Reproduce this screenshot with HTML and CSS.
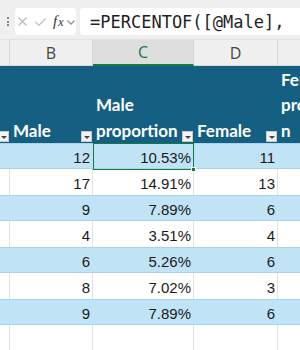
FILE: index.html
```html
<!DOCTYPE html>
<html>
<head>
<meta charset="utf-8">
<link rel="stylesheet" href="styles.css">
</head>
<body>
<div class="fbar">
  <div class="grip"><span></span><span></span><span></span></div>
  <div class="btns">
    <svg class="ico-x" width="9" height="9" viewBox="0 0 9 9"><path d="M0.5 0.5 L8.5 8.5 M8.5 0.5 L0.5 8.5" stroke="#b9b9b9" stroke-width="1.1" fill="none"/></svg>
    <svg class="ico-ok" width="11" height="8" viewBox="0 0 11 8"><path d="M0.5 4 L4 7.3 L10.5 0.5" stroke="#b9b9b9" stroke-width="1.1" fill="none"/></svg>
    <span class="fx"><i>f</i><i class="x">x</i></span>
    <svg class="ico-chev" width="8" height="5" viewBox="0 0 8 5"><path d="M0.5 0.5 L4 4.2 L7.5 0.5" stroke="#8a8a8a" stroke-width="1.1" fill="none"/></svg>
  </div>
  <div class="formula">=PERCENTOF([@Male],</div>
</div>

<div class="row colhead">
  <div class="c"></div>
  <div class="c">B</div>
  <div class="c sel">C</div>
  <div class="c">D</div>
  <div class="c"></div>
</div>

<div class="row thead">
  <div class="h"><span class="flt"></span></div>
  <div class="h"><span>Male</span><span class="flt"></span></div>
  <div class="h"><span>Male</span><span>proportion</span><span class="flt"></span></div>
  <div class="h"><span>Female</span><span class="flt"></span></div>
  <div class="h"><span>Female</span><span>proportio</span><span>n</span></div>
</div>

<div class="row r band">
  <div class="c"></div><div class="c">12</div><div class="c cur">10.53%<span class="handle"></span></div><div class="c">11</div><div class="c"></div>
</div>
<div class="row r">
  <div class="c"></div><div class="c">17</div><div class="c">14.91%</div><div class="c">13</div><div class="c"></div>
</div>
<div class="row r band">
  <div class="c"></div><div class="c">9</div><div class="c">7.89%</div><div class="c">6</div><div class="c"></div>
</div>
<div class="row r">
  <div class="c"></div><div class="c">4</div><div class="c">3.51%</div><div class="c">4</div><div class="c"></div>
</div>
<div class="row r band">
  <div class="c"></div><div class="c">6</div><div class="c">5.26%</div><div class="c">6</div><div class="c"></div>
</div>
<div class="row r">
  <div class="c"></div><div class="c">8</div><div class="c">7.02%</div><div class="c">3</div><div class="c"></div>
</div>
<div class="row r band">
  <div class="c"></div><div class="c">9</div><div class="c">7.89%</div><div class="c">6</div><div class="c"></div>
</div>
<div class="row r">
  <div class="c"></div><div class="c"></div><div class="c"></div><div class="c"></div><div class="c"></div>
</div>
</body>
</html>
```

FILE: styles.css
```css
* { box-sizing: border-box; margin: 0; padding: 0; }
html, body { width: 300px; height: 350px; overflow: hidden; background: #fff; }
body { font-family: "Liberation Sans", Arial, sans-serif; }

.fbar {
  display: flex;
  align-items: flex-start;
  width: 340px;
  height: 40px;
  padding-top: 8px;
  background: #efefef;
  border-bottom: 1px solid #e2e2e2;
}
.grip {
  width: 15px;
  height: 27px;
  display: flex;
  flex-direction: column;
  align-items: center;
  justify-content: center;
  gap: 1.5px;
}
.grip span { width: 2px; height: 2px; background: #666; border-radius: 1px; }
.btns {
  width: 61px;
  height: 27px;
  background: #fff;
  border-radius: 4px;
  display: flex;
  align-items: center;
  padding-left: 3px;
}
.ico-x { margin-top: 0px; }
.ico-ok { margin-left: 8px; margin-top: 1px; }
.fx {
  margin-left: 7px;
  font-family: "Liberation Serif", "Times New Roman", serif;
  font-size: 15px;
  color: #333;
  line-height: 1;
  white-space: nowrap;
}
.fx .x { font-size: 12px; margin-left: 1px; }
.ico-chev { margin-left: 3px; margin-top: 1px; }
.formula {
  flex: 1;
  margin-left: 4px;
  height: 27px;
  background: #fff;
  border-radius: 4px 0 0 4px;
  padding: 2px 0 0 10px;
  font-family: "DejaVu Sans Mono", "Liberation Mono", monospace;
  font-size: 17px;
  line-height: 25px;
  color: #1f1f1f;
  white-space: nowrap;
  overflow: hidden;
}

.row {
  display: grid;
  grid-template-columns: 10px 83px 101px 84px 80px;
  width: 358px;
}

.colhead { height: 26px; }
.colhead .c {
  display: flex;
  align-items: center;
  justify-content: center;
  background: #efefef;
  border-right: 1px solid #d6d6d6;
  border-bottom: 1px solid #dadada;
  font-family: "Open Sans", "Noto Sans", sans-serif;
  font-size: 16px;
  color: #444;
}
.colhead .c.sel {
  background: #dedede;
  color: #107c41;
  border-bottom: 2px solid #107c41;
}

.thead {
  height: 77px;
  background: #156082;
  color: #fff;
  font-family: Lato, "Open Sans", sans-serif;
  font-weight: 700;
  font-size: 17px;
  line-height: 25.5px;
}
.thead .h {
  position: relative;
  display: flex;
  flex-direction: column;
  justify-content: flex-end;
  padding-left: 3px;
  white-space: nowrap;
}
.flt {
  position: absolute;
  right: 1px;
  bottom: 1px;
  width: 11px;
  height: 11px;
  background: #f3f3f3;
  border: 1px solid #c9c9c9;
}
.flt::after {
  content: "";
  position: absolute;
  left: 2px;
  top: 4px;
  border-left: 3px solid transparent;
  border-right: 3px solid transparent;
  border-top: 3px solid #444;
}

.r { height: 26px; }
.r.band {
  background: #c0e4f5;
  box-shadow: inset 0 1px 0 #a6d4ea, inset 0 -1px 0 #a6d4ea;
}
.r .c {
  text-align: right;
  padding: 4px 2px 0 0;
  font-size: 15px;
  line-height: 22px;
  color: #1a1a1a;
  border-right: 1px solid #e1e1e1;
}
.r.band .c { border-right-color: transparent; }
.r .c.cur {
  position: relative;
  border: 1px solid #107c41;
  padding-top: 3px;
}
.handle {
  position: absolute;
  right: -3px;
  bottom: -3px;
  width: 5px;
  height: 5px;
  background: #107c41;
  border: 1px solid #fff;
}
```
